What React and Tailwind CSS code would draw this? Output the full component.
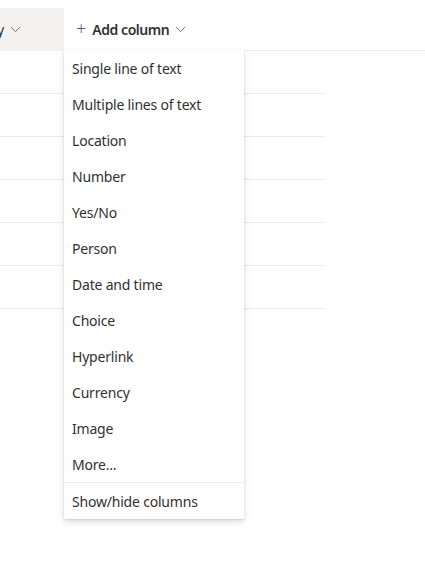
import React from "react";

const items = [
  "Single line of text",
  "Multiple lines of text",
  "Location",
  "Number",
  "Yes/No",
  "Person",
  "Date and time",
  "Choice",
  "Hyperlink",
  "Currency",
  "Image",
  "More...",
];

function Chevron({ className }) {
  return (
    <svg viewBox="0 0 12 8" className={className} fill="none" stroke="currentColor" strokeWidth="1">
      <path d="M0.8 1.2 L6 6.4 L11.2 1.2" />
    </svg>
  );
}

export default function App() {
  return (
    <div
      className="relative w-[425px] h-[574px] bg-white text-[#323130] overflow-hidden"
      style={{ fontFamily: '"Segoe UI", "Noto Sans", sans-serif' }}
    >
      <div className="flex h-[51px]">
        <div className="mt-[8px] w-[64px] h-[43px] bg-[#f3f2f1] flex items-center gap-[6px] text-[14px]">
          <span className="-ml-[3px]">y</span>
          <Chevron className="w-[11px] h-[7px] text-[#605e5c]" />
        </div>
        <div className="flex-1 flex items-center border-b border-[#edebe9] pt-[8px] pl-[12px] text-[14px]">
          <span className="text-[18px] font-light text-[#605e5c] leading-none mr-[6px] -mt-[2px]">+</span>
          <span className="font-semibold tracking-[-0.45px]">Add column</span>
          <Chevron className="ml-[6px] w-[11px] h-[7px] text-[#605e5c]" />
        </div>
      </div>
      <div className="w-[325px]">
        {[0, 1, 2, 3, 4, 5].map((i) => (
          <div key={i} className="h-[43px] border-b border-[#edebe9]" />
        ))}
      </div>

      <div className="absolute left-[64px] top-[50px] w-[180px] bg-white shadow-[0_3.2px_7.2px_rgba(0,0,0,0.13),0_0.6px_1.8px_rgba(0,0,0,0.11)]">
        {items.map((t) => (
          <div key={t} className="h-[36px] flex items-center px-[8px] text-[14px] tracking-[-0.2px]">
            {t}
          </div>
        ))}
        <div className="border-t border-[#edebe9] h-[37px] flex items-center px-[8px] text-[14px] tracking-[-0.2px]">
          Show/hide columns
        </div>
      </div>
    </div>
  );
}
